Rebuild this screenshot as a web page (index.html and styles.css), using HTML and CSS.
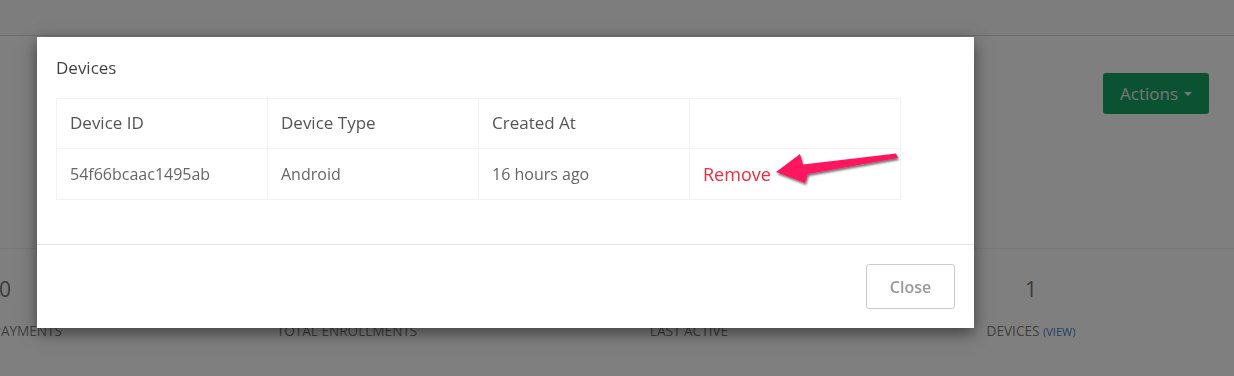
FILE: index.html
```html
<!DOCTYPE html>
<html lang="en">
<head>
<meta charset="utf-8">
<title>Devices</title>
<link rel="stylesheet" href="styles.css">
</head>
<body>
<div class="page">
  <div class="topbar"></div>
  <div class="page-head">
    <button class="btn-actions">Actions <span class="caret"></span></button>
  </div>
  <div class="stats">
    <div class="stat"><div class="stat-num">0</div><div class="stat-label">TOTAL PAYMENTS</div></div>
    <div class="stat"><div class="stat-num">0</div><div class="stat-label">TOTAL ENROLLMENTS</div></div>
    <div class="stat"><div class="stat-num">-</div><div class="stat-label">LAST ACTIVE</div></div>
    <div class="stat"><div class="stat-num">1</div><div class="stat-label">DEVICES <a class="view-link">(VIEW)</a></div></div>
  </div>
</div>

<div class="backdrop"></div>

<div class="modal">
  <div class="modal-header">Devices</div>
  <div class="modal-body">
    <table class="devices">
      <thead>
        <tr><th>Device ID</th><th>Device Type</th><th>Created At</th><th></th></tr>
      </thead>
      <tbody>
        <tr><td>54f66bcaac1495ab</td><td>Android</td><td>16 hours ago</td><td><a class="remove">Remove</a></td></tr>
      </tbody>
    </table>
  </div>
  <div class="modal-footer">
    <button class="btn-close">Close</button>
  </div>
</div>

<svg class="annotation" viewBox="0 0 1234 376" width="1234" height="376" aria-hidden="true">
  <defs>
    <filter id="sh" x="-10%" y="-30%" width="130%" height="180%">
      <feDropShadow dx="1" dy="2" stdDeviation="1.2" flood-color="#000" flood-opacity="0.55"/>
    </filter>
  </defs>
  <polygon filter="url(#sh)" fill="#ff1560"
    points="776,172 800,154 803,164.5 896,153.5 898,158 808,174 805,183"/>
</svg>
</body>
</html>
```

FILE: styles.css
```css
* { box-sizing: border-box; }

html, body {
  margin: 0;
  padding: 0;
  width: 1234px;
  height: 376px;
  overflow: hidden;
  background: #ffffff;
  font-family: "Open Sans", "Liberation Sans", sans-serif;
  color: #333;
}

.page {
  width: 1234px;
  height: 376px;
  overflow: hidden;
}

.topbar {
  height: 36px;
  background: #fafafa;
  border-bottom: 1px solid #d8d8d8;
}

.page-head {
  display: flex;
  justify-content: flex-end;
  padding: 37px 25px 0 0;
  height: 212px;
}

.btn-actions {
  width: 106px;
  height: 41px;
  border: 0;
  border-radius: 3px;
  background: #14a464;
  color: #eee;
  font-family: inherit;
  font-size: 17px;
  padding: 0 0 1px;
  display: flex;
  align-items: center;
  justify-content: center;
  gap: 6px;
}

.caret {
  width: 0;
  height: 0;
  border-left: 4px solid transparent;
  border-right: 4px solid transparent;
  border-top: 4px solid #eee;
  margin-top: 2px;
}

.stats {
  border-top: 1px solid #eeeeee;
  display: grid;
  grid-template-columns: repeat(4, 342px);
  margin-left: -166px;
  padding-top: 25px;
}

.stat {
  text-align: center;
}

.stat-num {
  font-size: 21px;
  line-height: 30px;
  color: #777;
}

.stat-label {
  margin-top: 17px;
  font-size: 13.6px;
  line-height: 20px;
  color: #7e7e7e;
}

.view-link {
  font-size: 11px;
  color: #3e7ecb;
}

.backdrop {
  position: fixed;
  inset: 0;
  background: rgba(0, 0, 0, 0.5);
}

.modal {
  position: absolute;
  top: 37px;
  left: 37px;
  width: 937px;
  height: 291px;
  background: #fff;
  box-shadow: 0 5px 15px rgba(0, 0, 0, 0.5);
  display: flex;
  flex-direction: column;
}

.modal-header {
  padding: 19px 19px 0;
  font-size: 17px;
  line-height: 24px;
  color: #444;
}

.modal-body {
  padding: 18px 19px 44px;
}

.devices {
  width: 845px;
  border-collapse: collapse;
  table-layout: fixed;
}

.devices th,
.devices td {
  border: 1px solid #f2f2f2;
  padding: 12px 13px 13px;
  line-height: 24px;
  text-align: left;
  font-weight: 400;
}

.devices th {
  font-size: 17px;
  color: #555;
}

.devices td {
  font-size: 16px;
  color: #666;
}

.remove {
  color: #f8283f;
  font-size: 18px;
  position: relative;
  top: 1px;
}

.modal-footer {
  border-top: 1px solid #e5e5e5;
  padding: 19px 19px 19px;
  display: flex;
  justify-content: flex-end;
}

.btn-close {
  width: 89px;
  height: 45px;
  border: 1px solid #cccccc;
  border-radius: 3px;
  background: #fff;
  color: #999;
  font-family: inherit;
  font-size: 16px;
  font-weight: 600;
}

.annotation {
  position: absolute;
  top: 0;
  left: 0;
  pointer-events: none;
}
```
